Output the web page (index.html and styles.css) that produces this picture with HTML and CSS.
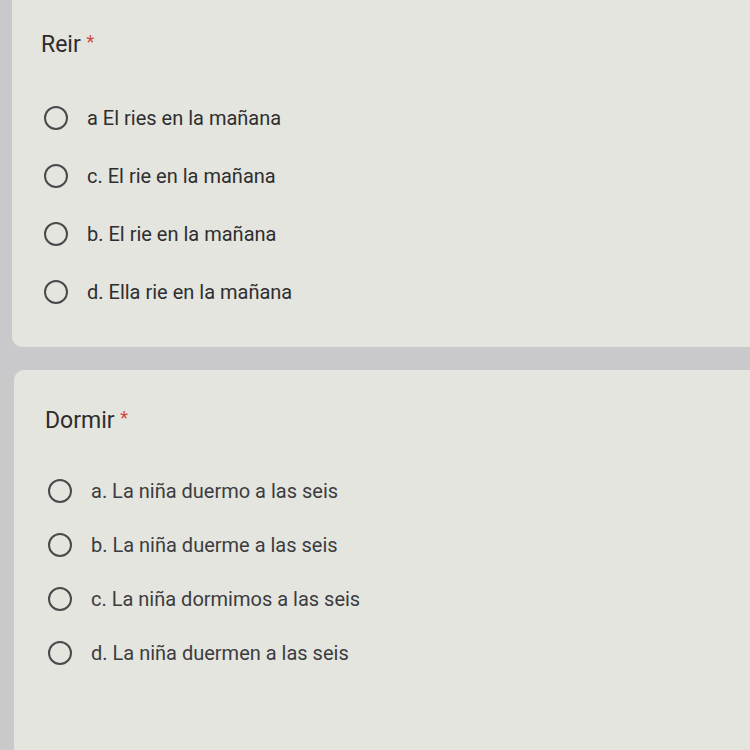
FILE: index.html
```html
<!DOCTYPE html>
<html lang="es">
<head>
<meta charset="utf-8">
<title>Formulario</title>
<link rel="stylesheet" href="styles.css">
</head>
<body>
<div class="page">
  <section class="card card-first">
    <div class="title">Reir <span class="req">*</span></div>
    <ul class="options">
      <li class="opt"><span class="radio"></span><span class="label">a El ries en la mañana</span></li>
      <li class="opt"><span class="radio"></span><span class="label">c. El rie en la mañana</span></li>
      <li class="opt"><span class="radio"></span><span class="label">b. El rie en la mañana</span></li>
      <li class="opt"><span class="radio"></span><span class="label">d. Ella rie en la mañana</span></li>
    </ul>
  </section>
  <section class="card card-second">
    <div class="title">Dormir <span class="req">*</span></div>
    <ul class="options options-tight">
      <li class="opt"><span class="radio"></span><span class="label">a. La niña duermo a las seis</span></li>
      <li class="opt"><span class="radio"></span><span class="label">b. La niña duerme a las seis</span></li>
      <li class="opt"><span class="radio"></span><span class="label">c. La niña dormimos a las seis</span></li>
      <li class="opt"><span class="radio"></span><span class="label">d. La niña duermen a las seis</span></li>
    </ul>
  </section>
</div>
</body>
</html>
```

FILE: styles.css
```css
html, body {
  margin: 0;
  padding: 0;
  height: 100%;
  overflow: hidden;
}
body {
  background: #c9c9cc;
  font-family: Roboto, "Liberation Sans", Arial, sans-serif;
  color: #343434;
}
.page {
  display: flex;
  flex-direction: column;
  height: 750px;
}
.card {
  background: #e4e5df;
}
.card-first {
  margin-left: 12px;
  height: 347px;
  box-sizing: border-box;
  padding: 29px 0 0 29px;
  border-radius: 0 0 0 10px;
}
.card-second {
  margin-left: 14px;
  margin-top: 23px;
  flex: 1;
  padding: 35px 0 0 31px;
  border-radius: 10px 0 0 0;
}
.title {
  font-size: 23px;
  line-height: 26px;
  color: #2c2c2c;
}
.req {
  color: #cf4a42;
  font-size: 18px;
  vertical-align: 4px;
}
.options {
  list-style: none;
  margin: 31px 0 0 0;
  padding: 0;
}
.options-tight {
  margin-top: 30px;
}
.opt {
  display: flex;
  align-items: center;
  height: 58px;
}
.options-tight .opt {
  height: 54px;
}
.radio {
  width: 20px;
  height: 20px;
  border: 2.5px solid #4a4a4c;
  border-radius: 50%;
  margin-left: 3px;
  flex: none;
}
.label {
  margin-left: 19px;
  font-size: 20px;
  color: #2e2e30;
}
.options-tight .label {
  color: #3c3c40;
}
```
